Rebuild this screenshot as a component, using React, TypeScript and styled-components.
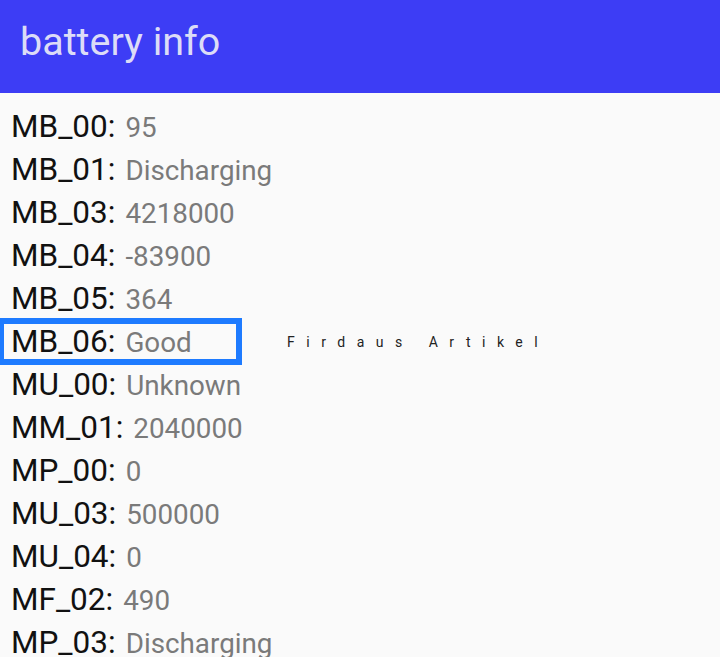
import React from 'react'
import styled, { createGlobalStyle } from 'styled-components'

const GlobalStyle = createGlobalStyle`
    html, body {
        margin: 0;
        padding: 0;
        background: #fafafa;
        font-family: Roboto, "Noto Sans", sans-serif;
    }
`

const Page = styled.div`
    width: 720px;
    height: 657px;
    overflow: hidden;
    background: #fafafa;
`

const AppBar = styled.header`
    height: 93px;
    background: #3d3df5;
    display: flex;
    align-items: center;
    padding: 0 0 10px 20px;
    box-sizing: border-box;
`

const Title = styled.h1`
    margin: 0;
    font-size: 39.5px;
    font-weight: 400;
    color: #dcdcf7;
`

const List = styled.div`
    display: flex;
    flex-direction: column;
    padding: 12px 0 0 0;
`

const Row = styled.div`
    height: 43px;
    display: flex;
    align-items: center;
    gap: 45px;
`

const Entry = styled.div<{ $boxed?: boolean }>`
    display: flex;
    align-items: baseline;
    box-sizing: border-box;
    height: ${p => (p.$boxed ? '47px' : 'auto')};
    width: ${p => (p.$boxed ? '244px' : 'auto')};
    margin-left: ${p => (p.$boxed ? '-2px' : '0')};
    padding-left: ${p => (p.$boxed ? '7px' : '11px')};
    border: ${p => (p.$boxed ? '6px solid #1e7bff' : 'none')};
    line-height: 35px;
`

const Key = styled.span`
    font-size: 31.5px;
    color: #111;
`

const Value = styled.span`
    font-size: 27.8px;
    color: #7a7a7a;
    margin-left: 10px;
`

const Credit = styled.span`
    font-size: 14px;
    color: #222;
    letter-spacing: 11.5px;
`

type Item = { key: string; value: string }

const items: Item[] = [
    { key: 'MB_00', value: '95' },
    { key: 'MB_01', value: 'Discharging' },
    { key: 'MB_03', value: '4218000' },
    { key: 'MB_04', value: '-83900' },
    { key: 'MB_05', value: '364' },
    { key: 'MB_06', value: 'Good' },
    { key: 'MU_00', value: 'Unknown' },
    { key: 'MM_01', value: '2040000' },
    { key: 'MP_00', value: '0' },
    { key: 'MU_03', value: '500000' },
    { key: 'MU_04', value: '0' },
    { key: 'MF_02', value: '490' },
    { key: 'MP_03', value: 'Discharging' },
]

const App = (): JSX.Element => {
    return (
        <Page>
            <GlobalStyle />
            <AppBar>
                <Title>battery info</Title>
            </AppBar>
            <List>
                {items.map(item => {
                    const boxed = item.key === 'MB_06'
                    return (
                        <Row key={item.key}>
                            <Entry $boxed={boxed}>
                                <Key>{item.key}:</Key>
                                <Value>{item.value}</Value>
                            </Entry>
                            {boxed && <Credit>Firdaus Artikel</Credit>}
                        </Row>
                    )
                })}
            </List>
        </Page>
    )
}

export default App
